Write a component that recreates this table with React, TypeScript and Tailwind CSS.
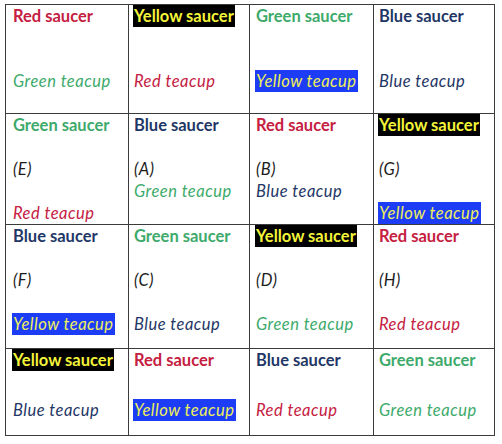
import type { ReactNode } from "react";

type Tone = "red" | "green" | "blue" | "yellow";

const saucerTone: Record<Tone, string> = {
  red: "text-[#c5203f]",
  green: "text-[#3daa6b]",
  blue: "text-[#1f3766]",
  yellow: "text-[#f4f43a] bg-black",
};

const teacupTone: Record<Tone, string> = {
  red: "text-[#c5203f]",
  green: "text-[#3daa6b]",
  blue: "text-[#1f3766]",
  yellow: "text-[#eef05a] bg-[#1c3cf5]",
};

const names: Record<Tone, string> = {
  red: "Red",
  green: "Green",
  blue: "Blue",
  yellow: "Yellow",
};

type Cell = { saucer: Tone; teacup: Tone; cupLine: number; letter?: string };

const rows: { height: string; cells: Cell[] }[] = [
  {
    height: "h-[109px]",
    cells: [
      { saucer: "red", teacup: "green", cupLine: 3 },
      { saucer: "yellow", teacup: "red", cupLine: 3 },
      { saucer: "green", teacup: "yellow", cupLine: 3 },
      { saucer: "blue", teacup: "blue", cupLine: 3 },
    ],
  },
  {
    height: "h-[111px]",
    cells: [
      { saucer: "green", teacup: "red", cupLine: 4, letter: "E" },
      { saucer: "blue", teacup: "green", cupLine: 3, letter: "A" },
      { saucer: "red", teacup: "blue", cupLine: 3, letter: "B" },
      { saucer: "yellow", teacup: "yellow", cupLine: 4, letter: "G" },
    ],
  },
  {
    height: "h-[124px]",
    cells: [
      { saucer: "blue", teacup: "yellow", cupLine: 4, letter: "F" },
      { saucer: "green", teacup: "blue", cupLine: 4, letter: "C" },
      { saucer: "yellow", teacup: "green", cupLine: 4, letter: "D" },
      { saucer: "red", teacup: "red", cupLine: 4, letter: "H" },
    ],
  },
  {
    height: "h-[87px]",
    cells: [
      { saucer: "yellow", teacup: "blue", cupLine: 3 },
      { saucer: "red", teacup: "yellow", cupLine: 3 },
      { saucer: "blue", teacup: "red", cupLine: 3 },
      { saucer: "green", teacup: "green", cupLine: 3 },
    ],
  },
];

const widths = ["w-[123px] pl-[6px]", "w-[121px] pl-[4px]", "w-[124px] pl-[5px]", "w-[121px] pl-[4px]"];

function TableCell({ cell, width }: { cell: Cell; width: string }) {
  const lines: ReactNode[] = [null, null, null, null, null];
  lines[0] = (
    <span className={`inline-block px-[1px] font-bold ${saucerTone[cell.saucer]}`}>
      {names[cell.saucer]} saucer
    </span>
  );
  if (cell.letter) {
    lines[2] = <span className="px-[1px] italic tracking-[0.5px] text-[#1c1c1c]">({cell.letter})</span>;
  }
  lines[cell.cupLine] = (
    <span className={`inline-block px-[1px] italic tracking-[0.5px] ${teacupTone[cell.teacup]}`}>
      {names[cell.teacup]} teacup
    </span>
  );

  return (
    <div className={`${width} flex flex-col overflow-hidden whitespace-nowrap border-r border-b border-[#3b3b3b]`}>
      {lines.map((l, i) => (
        <div key={i} className="h-[22px] leading-[22px]">
          {l}
        </div>
      ))}
    </div>
  );
}

export default function App() {
  return (
    <div className="h-[444px] w-[502px] bg-white pt-[4px] pl-[5px] font-['Lato','Open_Sans',sans-serif] text-[16.5px]">
      <div className="flex w-[490px] flex-col border-t border-l border-[#3b3b3b]">
        {rows.map((row, r) => (
          <div key={r} className={`flex ${row.height}`}>
            {row.cells.map((cell, c) => (
              <TableCell key={c} cell={cell} width={widths[c]} />
            ))}
          </div>
        ))}
      </div>
    </div>
  );
}
